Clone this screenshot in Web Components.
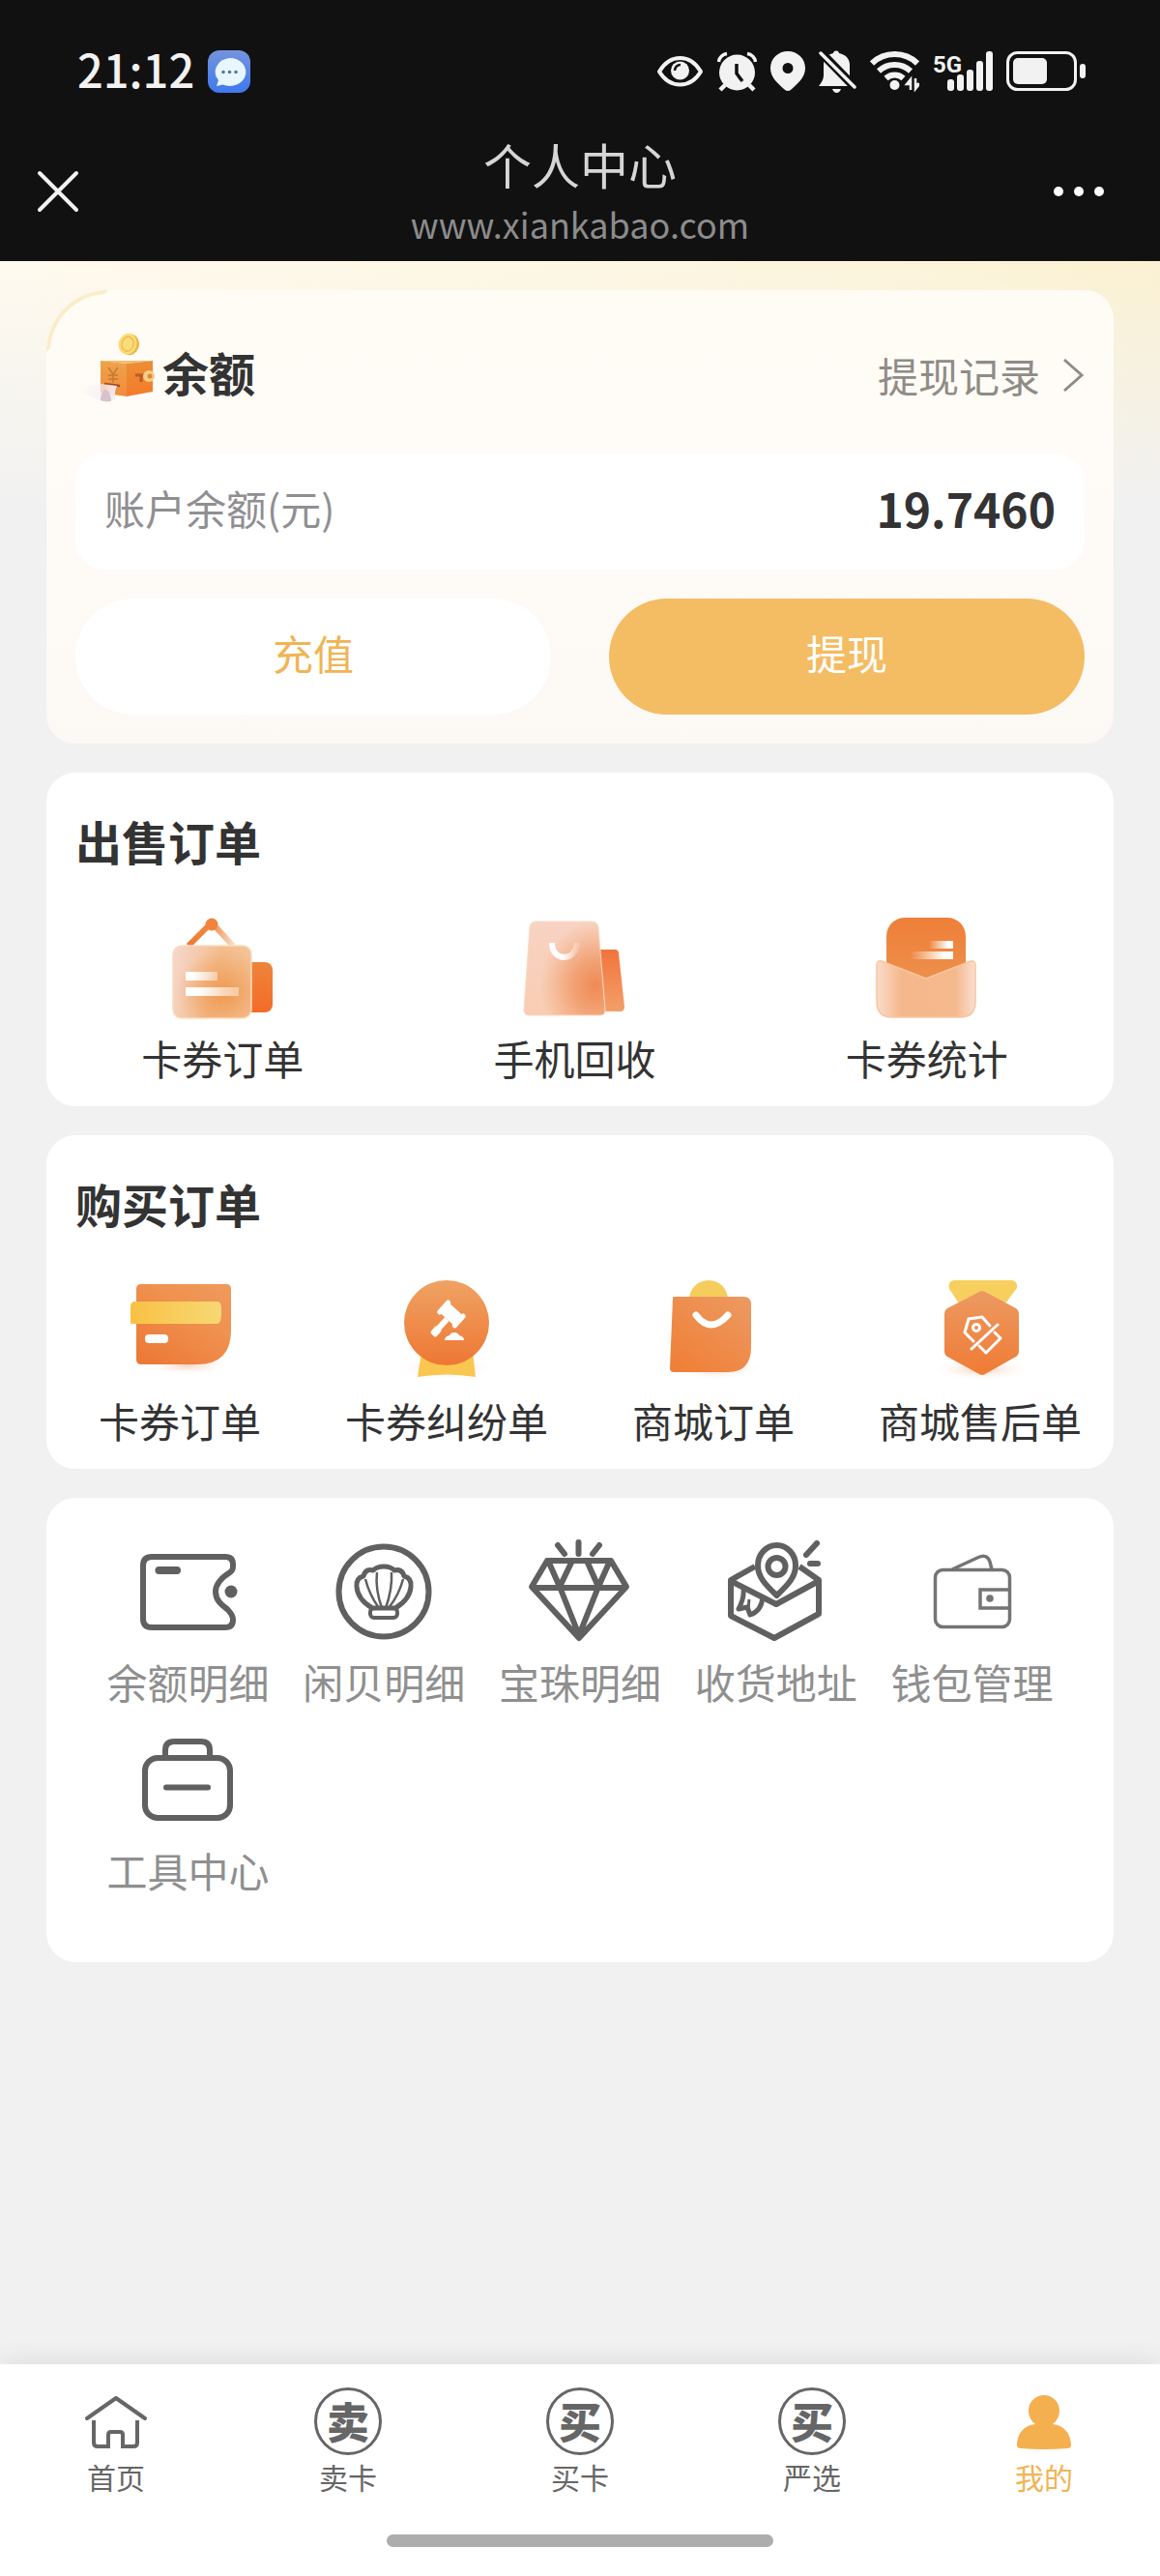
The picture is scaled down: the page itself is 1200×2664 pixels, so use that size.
<!DOCTYPE html>
<html lang="zh-CN">
<head>
<meta charset="UTF-8">
<meta name="viewport" content="width=device-width, initial-scale=1">
<title>个人中心</title>
<style>
  body {
    margin: 0;
    background: #f1f1f1;
    color: #333;
    font-family: "Noto Sans CJK SC", sans-serif;
    font-size: 42px;
    line-height: 48px;
  }
</style>
</head>
<body>
<user-center></user-center>

<script>
/**
 * Icon drawings, keyed by name
 */
const icons = {
  eye: `<svg width="49" height="44" viewBox="0 0 49 44" fill="none" stroke="#f2f2f2">
    <path d="M3 22C9 12 16 8 24.5 8S40 12 46 22C40 32 33 35.500 24.500 35.500S9 32 3 22Z" stroke-width="4" stroke-linejoin="round"/>
    <circle cx="24.5" cy="21" r="9.5" fill="#f2f2f2" stroke="none"/>
    <path d="M19 21a6 6 0 0 1 6-6" stroke="#111" stroke-width="2.5"/></svg>`,
  alarm: `<svg width="41" height="44" viewBox="0 0 41 44" fill="none" stroke="#f2f2f2" stroke-width="4">
    <circle cx="20.5" cy="23" r="18.5" fill="#f2f2f2" stroke="none"/>
    <path d="M1.500 12A10 10 0 0 1 10 3.500M39.500 12A10 10 0 0 0 31 3.500" stroke-width="3.5"/>
    <path d="M8 36l-5 5M33 36l5 5" stroke-width="4.5"/>
    <path d="M20 14v10l6 8" stroke="#111" stroke-width="3.5"/></svg>`,
  pin: `<svg width="36" height="44" viewBox="0 0 36 44">
    <path fill="#f2f2f2" fill-rule="evenodd" d="M18 1C8 1 0 8.500 0 18.500 0 27 6 33 14.500 40.500q3.500 3 7 0C30 33 36 27 36 18.500 36 8.500 28 1 18 1Zm0 12a5.500 5.500 0 1 1 0 11 5.500 5.500 0 0 1 0-11Z"/></svg>`,
  mute: `<svg width="39" height="44" viewBox="0 0 39 44">
    <path fill="#f2f2f2" d="M18 .5c2 0 2.500 1 3 2.500 7 1.500 11 6 11 12v11c0 4 2 6 6 11H0c3-4 5-7 5-11V15C5 8 9 4.500 15 3c.5-1.500 1-2.500 3-2.500ZM14 40h9q-1.500 4-4.500 4T14 40Z"/>
    <path d="M-1-1l41 42" stroke="#111" stroke-width="9"/>
    <path d="M2 3l35 35" stroke="#f2f2f2" stroke-width="3.5" stroke-linecap="round"/></svg>`,
  wifi: `<svg width="51" height="44" viewBox="0 0 51 44" fill="none" stroke="#f2f2f2" stroke-width="6">
    <path d="M2 13.500a34 34 0 0 1 47 0M9 21.500a24 24 0 0 1 33 0M16.500 29a13 13 0 0 1 18 0"/>
    <circle cx="25.5" cy="36" r="5" fill="#f2f2f2" stroke="none"/>
    <path d="M42 41V30l-4 5h4M47 29v11l4-5h-4" stroke-width="2.5"/></svg>`,
  signal: `<svg width="62" height="44" viewBox="0 0 62 44" fill="#f2f2f2">
    <text x="0" y="23" font-family="Roboto, sans-serif" font-size="24" font-weight="700">5G</text>
    <rect x="15" y="30" width="7" height="12" rx="3"/><rect x="25" y="25" width="7" height="17" rx="3"/>
    <rect x="35" y="20" width="7" height="22" rx="3"/><rect x="45" y="11" width="7" height="31" rx="3"/>
    <rect x="55" y="1" width="7" height="41" rx="3"/></svg>`,
  battery: `<svg width="82" height="44" viewBox="0 0 82 44">
    <rect x="1.5" y="2.5" width="70" height="38" rx="10" fill="none" stroke="#f2f2f2" stroke-width="3"/>
    <rect x="7" y="8" width="35" height="27" rx="5" fill="#f2f2f2"/><rect x="76" y="14" width="6" height="15" rx="3" fill="#f2f2f2"/></svg>`,
  message: `<svg width="44" height="44" viewBox="0 0 44 44">
    <defs><linearGradient id="g" x2="0" y2="1"><stop stop-color="#7394dc"/><stop offset="1" stop-color="#4078ee"/></linearGradient></defs>
    <rect width="44" height="44" rx="12" fill="url(#g)"/>
    <path fill="#e8f7ff" d="M22.500 8a16.500 14.500 0 1 1-7 27.500L9 37l2-6A16.500 14.500 0 0 1 22.500 8Z"/>
    <g fill="#5a7599"><circle cx="16" cy="22.5" r="1.8"/><circle cx="22.5" cy="22.5" r="1.8"/><circle cx="29" cy="22.5" r="1.8"/></g></svg>`,

  purse: `<svg width="78" height="92" viewBox="0 0 78 92">
    <defs>
      <linearGradient id="front" x2="0" y2="1"><stop stop-color="#eda44b"/><stop offset="1" stop-color="#f28b3a"/></linearGradient>
      <linearGradient id="side" x2="0" y2="1"><stop stop-color="#ec8e35"/><stop offset="1" stop-color="#f47b2b"/></linearGradient>
      <linearGradient id="note"><stop stop-color="#f8f4f6" stop-opacity=".3"/><stop offset="1" stop-color="#f3eaf2"/></linearGradient>
    </defs>
    <g transform="rotate(16 49 14)"><ellipse cx="50" cy="14" rx="10" ry="11" fill="#e7b644"/><ellipse cx="48" cy="14" rx="9.5" ry="11" fill="#fbdc7c"/><ellipse cx="48" cy="14" rx="6" ry="7.5" fill="none" stroke="#edbd4d" stroke-width="1.5"/></g>
    <path fill="#f4bd6e" d="M20 31h54l-27 3Z"/>
    <path fill="url(#front)" d="M20 31l27 3v34l-27-4Z"/><path fill="url(#side)" d="M47 34l27-3v32l-27 5Z"/>
    <path d="M28 38l5 7 5-7M33 45v9M28 46h10M28 50h10" fill="none" stroke="#c47b30" stroke-width="1.5"/>
    <path d="M24 55l16 2" stroke="#a34c22" stroke-width="2.5"/>
    <path fill="url(#note)" d="M2 59l19-4 16 2q-3 7-2 14-14 4-19 0-5-4-16-6Z"/><path fill="#d7c2cd" d="M20 72q0-8 5-12 6 4 6 13-7 1-11-1Z"/>
    <path d="M56 46h15M62 46v7" stroke="#b95c25" stroke-width="3"/>
    <circle cx="70" cy="47" r="6" fill="#f7cd84"/><circle cx="71" cy="47" r="2.5" fill="#d98b3b"/></svg>`,

  board: `<svg width="120" height="120" viewBox="0 0 120 120">
    <defs>
      <linearGradient id="a" x2="1" y2=".2"><stop stop-color="#f6d8cf"/><stop offset=".6" stop-color="#f3bd8e"/><stop offset="1" stop-color="#f3c398"/></linearGradient>
      <radialGradient id="glow" cx=".65" cy=".65" r=".6"><stop stop-color="#ef9346" stop-opacity=".85"/><stop offset="1" stop-color="#ef9346" stop-opacity="0"/></radialGradient>
      <linearGradient id="b" x2="0" y2="1"><stop stop-color="#ee843b"/><stop offset="1" stop-color="#f36c28"/></linearGradient>
      <linearGradient id="c"><stop stop-color="#f07a34"/><stop offset=".5" stop-color="#ee8a45"/><stop offset="1" stop-color="#f9dcc4"/></linearGradient>
      <linearGradient id="w"><stop offset=".2" stop-color="#fff"/><stop offset="1" stop-color="#fff" stop-opacity=".4"/></linearGradient>
    </defs>
    <path d="M25 41l24-24 22 24" fill="none" stroke="url(#c)" stroke-width="6"/><circle cx="49" cy="19" r="6.5" fill="#f0843f"/>
    <rect x="70" y="58" width="42" height="52" rx="8" fill="url(#b)"/>
    <rect x="9" y="41" width="81" height="75" rx="9" fill="url(#a)"/><rect x="9" y="41" width="81" height="75" rx="9" fill="url(#glow)" stroke="#fbdcbc" stroke-width="1.5"/>
    <rect x="22" y="68" width="33" height="9" fill="url(#w)"/><rect x="22" y="84" width="55" height="9" fill="url(#w)"/></svg>`,
  phone: `<svg width="120" height="120" viewBox="0 0 120 120">
    <defs>
      <linearGradient id="a" x2="0" y2="1"><stop stop-color="#f8d3c3"/><stop offset="1" stop-color="#f8cdb2"/></linearGradient>
      <radialGradient id="glow" cx=".88" cy=".68" r=".68"><stop stop-color="#ee7c42" stop-opacity=".85"/><stop offset=".4" stop-color="#ee8448" stop-opacity=".6"/><stop offset="1" stop-color="#ee8c52" stop-opacity="0"/></radialGradient>
      <linearGradient id="b" x2="0" y2="1"><stop stop-color="#f1743c"/><stop offset="1" stop-color="#f3a068"/></linearGradient>
      <linearGradient id="w"><stop offset=".4" stop-color="#fff"/><stop offset="1" stop-color="#fff" stop-opacity=".2"/></linearGradient>
    </defs>
    <path fill="url(#b)" d="M82 45h20q4 0 4 4l6 55q0 5-4 5H84Z"/>
    <path fill="url(#a)" d="M20 16h58q6 0 7 6l7 85q0 6-5 6H13q-5 0-5-6l6-85q1-6 6-6Z"/>
    <path fill="url(#glow)" stroke="#fbd9c2" d="M20 16h58q6 0 7 6l7 85q0 6-5 6H13q-5 0-5-6l6-85q1-6 6-6Z"/>
    <path d="M37 38c0 20 25 20 26 0" fill="none" stroke="url(#w)" stroke-width="6"/></svg>`,
  envelope: `<svg width="120" height="120" viewBox="0 0 120 120">
    <defs>
      <linearGradient id="a" x2="0" y2="1"><stop stop-color="#ef7f38"/><stop offset="1" stop-color="#eb9653"/></linearGradient>
      <linearGradient id="b"><stop stop-color="#f9dccb"/><stop offset=".25" stop-color="#f5b88c"/><stop offset=".8" stop-color="#f5b98e"/><stop offset="1" stop-color="#f8dfd0"/></linearGradient>
      <linearGradient id="w"><stop stop-color="#fff" stop-opacity="0"/><stop offset=".8" stop-color="#fff"/></linearGradient>
    </defs>
    <rect x="18" y="12" width="82" height="90" rx="19" fill="url(#a)"/>
    <rect x="62" y="36" width="25" height="8" fill="url(#w)"/><rect x="43" y="47" width="44" height="8" fill="url(#w)"/>
    <path fill="url(#b)" stroke="#fac59d" stroke-width="1.5" d="M13 57l46 18 46-18q5-1 5 4v38q0 16-16 16H24Q8 115 8 99V61q0-5 5-4Z"/></svg>`,

  card: `<svg width="120" height="120" viewBox="0 0 120 120">
    <defs>
      <linearGradient id="a" x1="1" x2=".2" y2="1"><stop stop-color="#ee9a5c"/><stop offset=".4" stop-color="#f09250"/><stop offset="1" stop-color="#ec7a38"/></linearGradient>
      <linearGradient id="b"><stop stop-color="#f9c144"/><stop offset="1" stop-color="#f7d874"/></linearGradient>
      <radialGradient id="sh"><stop stop-color="#f6cdb7"/><stop offset="1" stop-color="#fff" stop-opacity="0"/></radialGradient>
    </defs>
    <ellipse cx="68" cy="99" rx="45" ry="12" fill="url(#sh)"/>
    <path fill="url(#a)" d="M20 16h88q5 0 5 5v43q0 35-35 35H20q-5 0-5-5V21q0-5 5-5Z"/>
    <path fill="url(#b)" d="M13 34h86q4 0 4 8v5q0 10-5 10H9V40q0-6 4-6Z"/>
    <rect x="24" y="68" width="24" height="9" rx="4" fill="#fff"/></svg>`,
  gavel: `<svg width="120" height="120" viewBox="0 0 120 120">
    <defs>
      <linearGradient id="a" x2="0" y2="1"><stop stop-color="#efa363"/><stop offset="1" stop-color="#ee7733"/></linearGradient>
      <radialGradient id="sh"><stop stop-color="#f6cdb7"/><stop offset="1" stop-color="#fff" stop-opacity="0"/></radialGradient>
    </defs>
    <ellipse cx="60" cy="103" rx="50" ry="11" fill="url(#sh)"/>
    <path fill="#f9c650" d="M34 86h53l3 26q-30-5-60 0Z"/>
    <circle cx="60" cy="56" r="44" fill="url(#a)"/>
    <g fill="#fff" transform="rotate(42 65 47)"><rect x="54" y="40" width="22" height="14"/><rect x="52" y="38" width="5" height="18" rx="2"/><rect x="73" y="38" width="5" height="18" rx="2"/><rect x="62" y="54" width="6" height="18"/><rect x="61" y="66" width="8" height="10" rx="2"/></g>
    <path fill="#fff" d="M58 74q0-4 5-5 1-3 5-3t5 3q5 1 5 5Z"/></svg>`,
  bag: `<svg width="120" height="120" viewBox="0 0 120 120">
    <defs>
      <linearGradient id="a" x1="1" x2=".2" y2="1"><stop stop-color="#ec9a62"/><stop offset="1" stop-color="#f08038"/></linearGradient>
      <radialGradient id="sh"><stop stop-color="#f6cdb7"/><stop offset="1" stop-color="#fff" stop-opacity="0"/></radialGradient>
    </defs>
    <ellipse cx="64" cy="103" rx="46" ry="12" fill="url(#sh)"/>
    <circle cx="55" cy="32" r="20" fill="#f5cd5d"/>
    <path fill="url(#a)" d="M19 29h72q8 0 8 8v44q0 26-24 26H19q-4 0-4-4l3-72q0-2 1-2Z"/>
    <path d="M42 48q15 20 33 0" fill="none" stroke="#fff" stroke-width="7" stroke-linecap="round"/></svg>`,
  medal: `<svg width="120" height="120" viewBox="0 0 120 120">
    <defs>
      <linearGradient id="a" x2="0" y2="1"><stop stop-color="#ec9a62"/><stop offset="1" stop-color="#f07b35"/></linearGradient>
      <radialGradient id="sh"><stop stop-color="#f6cdb7"/><stop offset="1" stop-color="#fff" stop-opacity="0"/></radialGradient>
    </defs>
    <ellipse cx="62" cy="104" rx="52" ry="12" fill="url(#sh)"/>
    <path fill="#f7cf5f" d="M33 12h60q6 1 5 8L86 36 62 50 38 36 28 21q-2-8 5-9Z"/>
    <path fill="url(#a)" d="M59 24q3-2 6 0l32 17q3 2 3 6v38q0 4-3 6l-32 18q-3 2-6 0L26 91q-3-2-3-6V47q0-4 3-6Z"/>
    <g fill="none" stroke="#fff" stroke-width="3" stroke-linecap="round" stroke-linejoin="round">
      <path d="M70 59l-8-9-14 2-4 14 9 9M75 66l6 6-15 15-7-7M78 58L51 83"/><circle cx="56" cy="61" r="3.5"/></g></svg>`,

  ticket: `<svg width="120" height="120" viewBox="0 0 120 120" fill="none" stroke="#606060" stroke-width="6">
    <path d="M23 24h76q8 0 8 8c0 4 0 6-3 8-8 5-15 11-15 20 0 10 8 15 12 18 4 4 6 7 6 11q0 8-8 8H23q-9 0-9-9V33q0-9 9-9Z"/>
    <path d="M30.500 38H49" stroke-width="8" stroke-linecap="round"/><circle cx="105" cy="60" r="6.5" fill="#606060" stroke="none"/></svg>`,
  shell: `<svg width="120" height="120" viewBox="0 0 120 120" fill="none" stroke="#606060" stroke-width="5">
    <circle cx="60" cy="60" r="46.5" stroke-width="6"/>
    <path d="M48 77q-15-9-16-22-1-9 7-11 2-8 10-6 4-4 11-4t11 4q8-2 10 6 8 2 7 11-1 13-16 22Z" stroke-width="5" stroke-linejoin="round"/>
    <path d="M55 77q-10-14-14-30M58 77q-7-20-5-37M62 77q7-20 6-37M65 77q11-14 15-30" stroke-width="2.5"/>
    <rect x="46" y="77" width="28" height="10" rx="4" stroke-width="4"/></svg>`,
  diamond: `<svg width="120" height="120" viewBox="0 0 120 120" fill="none" stroke="#606060" stroke-width="6" stroke-linejoin="round">
    <path d="M26 28h66l16 27-49 53L10 55ZM10 56h98M27 28l12 27 13-27M67 28l12 27 12-27M39 55l20 50 20-50"/>
    <path d="M37 12l7 9M58.500 9v12M80 12l-7 9" stroke-linecap="round"/></svg>`,
  parcel: `<svg width="120" height="120" viewBox="0 0 120 120" fill="none" stroke="#606060" stroke-width="6" stroke-linejoin="round">
    <path d="M38 34L13 48v37l45 23 46-25V48L84 34M13 49l47 24 44-24"/>
    <path d="M60.500 64C49 53 41 45 41 33a19.500 21 0 0 1 39 0c0 12-8 20-19.500 31Z" fill="#fff"/><circle cx="60.5" cy="34" r="9"/>
    <path d="M26 58q1 9-5 20l9-2 3 8q12-4 13-19" stroke-width="5"/><path d="M32 68l-1 10" stroke-width="3"/>
    <path d="M91 22l11-12M95 31h8" stroke-linecap="round"/></svg>`,
  wallet: `<svg width="120" height="120" viewBox="0 0 120 120" fill="none" stroke="#747474" stroke-width="3.5">
    <rect x="21.5" y="37.5" width="77" height="59" rx="8"/><path d="M98 58H68v19h30M39 37l26-12c7-3 11-2 13 4l2 8"/>
    <circle cx="78" cy="67" r="3.8" fill="#747474" stroke="none"/></svg>`,
  toolbox: `<svg width="120" height="120" viewBox="0 0 120 120" fill="none" stroke="#606060" stroke-width="6">
    <rect x="16" y="37" width="88" height="62" rx="13"/><path d="M37 37V29q0-9 9-9h28q9 0 9 9v8"/><path d="M38 67.500h43" stroke-linecap="round"/></svg>`,

  home: `<svg width="72" height="72" viewBox="0 0 72 72" fill="none" stroke="#666" stroke-width="4">
    <path d="M6 33l30-21 30 21" stroke-linecap="round" stroke-linejoin="round"/>
    <path d="M13 35v23q0 4 4 4h11V50q0-3 3-3h9q3 0 3 3v12h11q4 0 4-4V35"/></svg>`,
  user: `<svg width="72" height="72" viewBox="0 0 72 72" fill="#f4b04f">
    <path d="M36 9c9 0 16 7 16 16 0 6-3 11-7 14 12 1 19 10 19 22q0 3-4 3-24 2-48 0-4 0-4-3c0-12 7-21 19-22-4-3-7-8-7-14 0-9 7-16 16-16Z"/></svg>`,
};

/**
 * Base class: attach the shadow root and fill it
 */
class BaseElement extends HTMLElement {
  constructor() {
    super();
    this.attachShadow({ mode: "open" });
  }
  connectedCallback() {
    this.shadowRoot.innerHTML = this.render();
  }
}

// time, notification icon and the system icons
class StatusBar extends BaseElement {
  render() {
    const system = ["eye", "alarm", "pin", "mute", "wifi", "signal", "battery"];
    return `
      <style>
        :host { display: flex; align-items: center; justify-content: space-between; height: 44px; padding: 52px 77px 0 80px; background: #111; color: #f2f2f2; }
        div { display: flex; align-items: center; gap: 14px; }
        svg { display: block; }
        time { padding-bottom: 6px; font-size: 47px; line-height: 44px; font-weight: 500; }
      </style>
      <div><time>21:12</time>${icons.message}</div>
      <div>${system.map((name) => icons[name]).join("")}</div>`;
  }
}
customElements.define("status-bar", StatusBar);

// in-app browser bar with the page's title and address
class TitleBar extends BaseElement {
  render() {
    return `
      <style>
        :host { display: grid; grid-template-columns: 1fr auto 1fr; align-items: center; height: 144px; padding: 30px 36px 0; background: #111; }
        div { padding-bottom: 6px; text-align: center; }
        h1, p { margin: 0; font-weight: 400; }
        h1 { font-size: 50px; line-height: 72px; color: #d6d6d6; }
        p { font-size: 36px; line-height: 52px; color: #8c8c8c; }
        button { display: block; padding: 0; border: 0; background: none; }
        button:last-child { justify-self: end; }
        svg { display: block; }
      </style>
      <button type="button" aria-label="关闭"><svg width="48" height="48" viewBox="0 0 48 48"><path d="M5 5l38 38M43 5L5 43" stroke="#f2f2f2" stroke-width="4" stroke-linecap="round"/></svg></button>
      <div><h1>个人中心</h1><p>www.xiankabao.com</p></div>
      <button type="button" aria-label="更多"><svg width="96" height="48" viewBox="0 0 96 48" fill="#fff"><circle cx="27" cy="24" r="5"/><circle cx="48" cy="24" r="5"/><circle cx="69" cy="24" r="5"/></svg></button>`;
  }
}
customElements.define("title-bar", TitleBar);

class BalanceCard extends BaseElement {
  render() {
    return `
      <style>
        :host { display: block; position: relative; padding: 30px; border-radius: 64px 30px 30px 30px; background: linear-gradient(#fffcf5, #fffbf7 40%, #fcf9f5); }
        /* highlight that runs along the large corner */
        :host::before { content: ""; position: absolute; left: 0; top: 0; width: 64px; height: 64px; border: 4px solid transparent; border-top-color: #fbecca; border-left-color: #fbecca; border-radius: 64px 0 0 0; box-sizing: border-box; }
        header { display: flex; align-items: center; justify-content: space-between; height: 116px; margin: 0 0 23px 6px; }
        svg { display: block; }
        h2 { display: flex; align-items: center; gap: 6px; margin: 0; font-size: 48px; line-height: 50px; font-weight: 700; }
        h2 span { padding-bottom: 8px; }
        a { display: flex; align-items: center; gap: 22px; color: #8f8c87; text-decoration: none; }
        .field { display: flex; align-items: center; justify-content: space-between; box-sizing: border-box; height: 120px; padding: 0 30px 8px; border-radius: 30px; background: #fff; color: #8f8f92; }
        strong { font-size: 48px; color: #333; }
        .actions { display: grid; grid-template-columns: 1fr 1fr; gap: 60px; margin-top: 30px; }
        button { height: 120px; padding: 0 0 8px; border: 0; border-radius: 60px; background: #fff; color: #f0b454; font: inherit; }
        button.primary { background: #f4bc63; color: #fff; }
      </style>
      <header>
        <h2>${icons.purse}<span>余额</span></h2>
        <a href="#records">提现记录<svg width="24" height="40" viewBox="0 0 24 40"><path d="M3 4l18 16L3 36" fill="none" stroke="#8f8c87" stroke-width="3"/></svg></a>
      </header>
      <div class="field"><span>账户余额(元)</span><strong>19.7460</strong></div>
      <div class="actions">
        <button type="button">充值</button>
        <button type="button" class="primary">提现</button>
      </div>`;
  }
}
customElements.define("balance-card", BalanceCard);

// white card with a heading and a row of icon tiles
class OrderPanel extends BaseElement {
  render() {
    return `
      <style>
        :host { display: block; padding: 45px 0 26px; border-radius: 30px; background: #fff; }
        h2 { margin: 0 30px 43px; font-size: 48px; line-height: 50px; font-weight: 700; }
        nav { display: grid; grid-template-columns: repeat(auto-fill, var(--tile-width, 25%)); }
      </style>
      <h2>${this.getAttribute("heading")}</h2>
      <nav><slot></slot></nav>`;
  }
}
customElements.define("order-panel", OrderPanel);

class ServiceGrid extends BaseElement {
  render() {
    return `
      <style>
        :host { display: grid; grid-template-columns: repeat(5, 1fr); gap: 18px 0; padding: 37px 45px 71px; border-radius: 30px; background: #fff; color: #8f8f8f; --tile-gap: 9px; }
      </style>
      <slot></slot>`;
  }
}
customElements.define("service-grid", ServiceGrid);

class IconTile extends BaseElement {
  render() {
    return `
      <style>
        :host { display: block; }
        a { display: flex; flex-direction: column; align-items: center; gap: var(--tile-gap, 13px); color: inherit; text-decoration: none; white-space: nowrap; }
        svg { display: block; }
      </style>
      <a href="#${this.getAttribute("icon")}">${icons[this.getAttribute("icon")]}<span><slot></slot></span></a>`;
  }
}
customElements.define("icon-tile", IconTile);

// a tab shows a drawn icon, or a character in a ring when "mark" is set
class TabItem extends BaseElement {
  render() {
    const mark = this.getAttribute("mark");
    return `
      <style>
        :host { display: block; flex: 1; }
        a { display: flex; flex-direction: column; align-items: center; gap: 3px; color: #666; font-size: 30px; line-height: 36px; text-decoration: none; }
        :host([active]) a { color: #f0b454; }
        svg { display: block; }
        b { box-sizing: border-box; width: 70px; height: 70px; margin: 1px; border: 3px solid #666; border-radius: 50%; font-size: 44px; line-height: 62px; font-weight: 900; text-align: center; }
      </style>
      <a href="#tab">${mark ? `<b>${mark}</b>` : icons[this.getAttribute("icon")]}<span><slot></slot></span></a>`;
  }
}
customElements.define("tab-item", TabItem);

class TabBar extends BaseElement {
  render() {
    return `
      <style>
        :host { display: block; padding: 23px 0 30px; background: #fff; box-shadow: 0 -4px 24px rgba(0, 0, 0, .08); }
        nav { display: flex; }
        .handle { width: 400px; height: 13px; margin: 42px auto 0; border-radius: 7px; background: #adadad; }
      </style>
      <nav><slot></slot></nav>
      <div class="handle"></div>`;
  }
}
customElements.define("tab-bar", TabBar);

/**
 * The page
 */
class UserCenter extends BaseElement {
  render() {
    return `
      <style>
        :host { display: flex; flex-direction: column; min-height: 100vh; }
        main { flex: 1; display: flex; flex-direction: column; gap: 30px; padding: 30px 48px;
          background: linear-gradient(rgba(241, 241, 241, 0), #f1f1f1) 0 0 / 100% 250px no-repeat,
            linear-gradient(90deg, #fffaee, #fdf6e0 60%, #fbf1d2) 0 0 / 100% 250px no-repeat, #f1f1f1; }
      </style>
      <status-bar></status-bar>
      <title-bar></title-bar>
      <main>
        <balance-card></balance-card>
        <order-panel heading="出售订单" style="--tile-width: 33%">
          <icon-tile icon="board">卡券订单</icon-tile>
          <icon-tile icon="phone">手机回收</icon-tile>
          <icon-tile icon="envelope">卡券统计</icon-tile>
        </order-panel>
        <order-panel heading="购买订单">
          <icon-tile icon="card">卡券订单</icon-tile>
          <icon-tile icon="gavel">卡券纠纷单</icon-tile>
          <icon-tile icon="bag">商城订单</icon-tile>
          <icon-tile icon="medal">商城售后单</icon-tile>
        </order-panel>
        <service-grid>
          <icon-tile icon="ticket">余额明细</icon-tile>
          <icon-tile icon="shell">闲贝明细</icon-tile>
          <icon-tile icon="diamond">宝珠明细</icon-tile>
          <icon-tile icon="parcel">收货地址</icon-tile>
          <icon-tile icon="wallet">钱包管理</icon-tile>
          <icon-tile icon="toolbox">工具中心</icon-tile>
        </service-grid>
      </main>
      <tab-bar>
        <tab-item icon="home">首页</tab-item>
        <tab-item mark="卖">卖卡</tab-item>
        <tab-item mark="买">买卡</tab-item>
        <tab-item mark="买">严选</tab-item>
        <tab-item icon="user" active>我的</tab-item>
      </tab-bar>`;
  }
}
customElements.define("user-center", UserCenter);
</script>
</body>
</html>
